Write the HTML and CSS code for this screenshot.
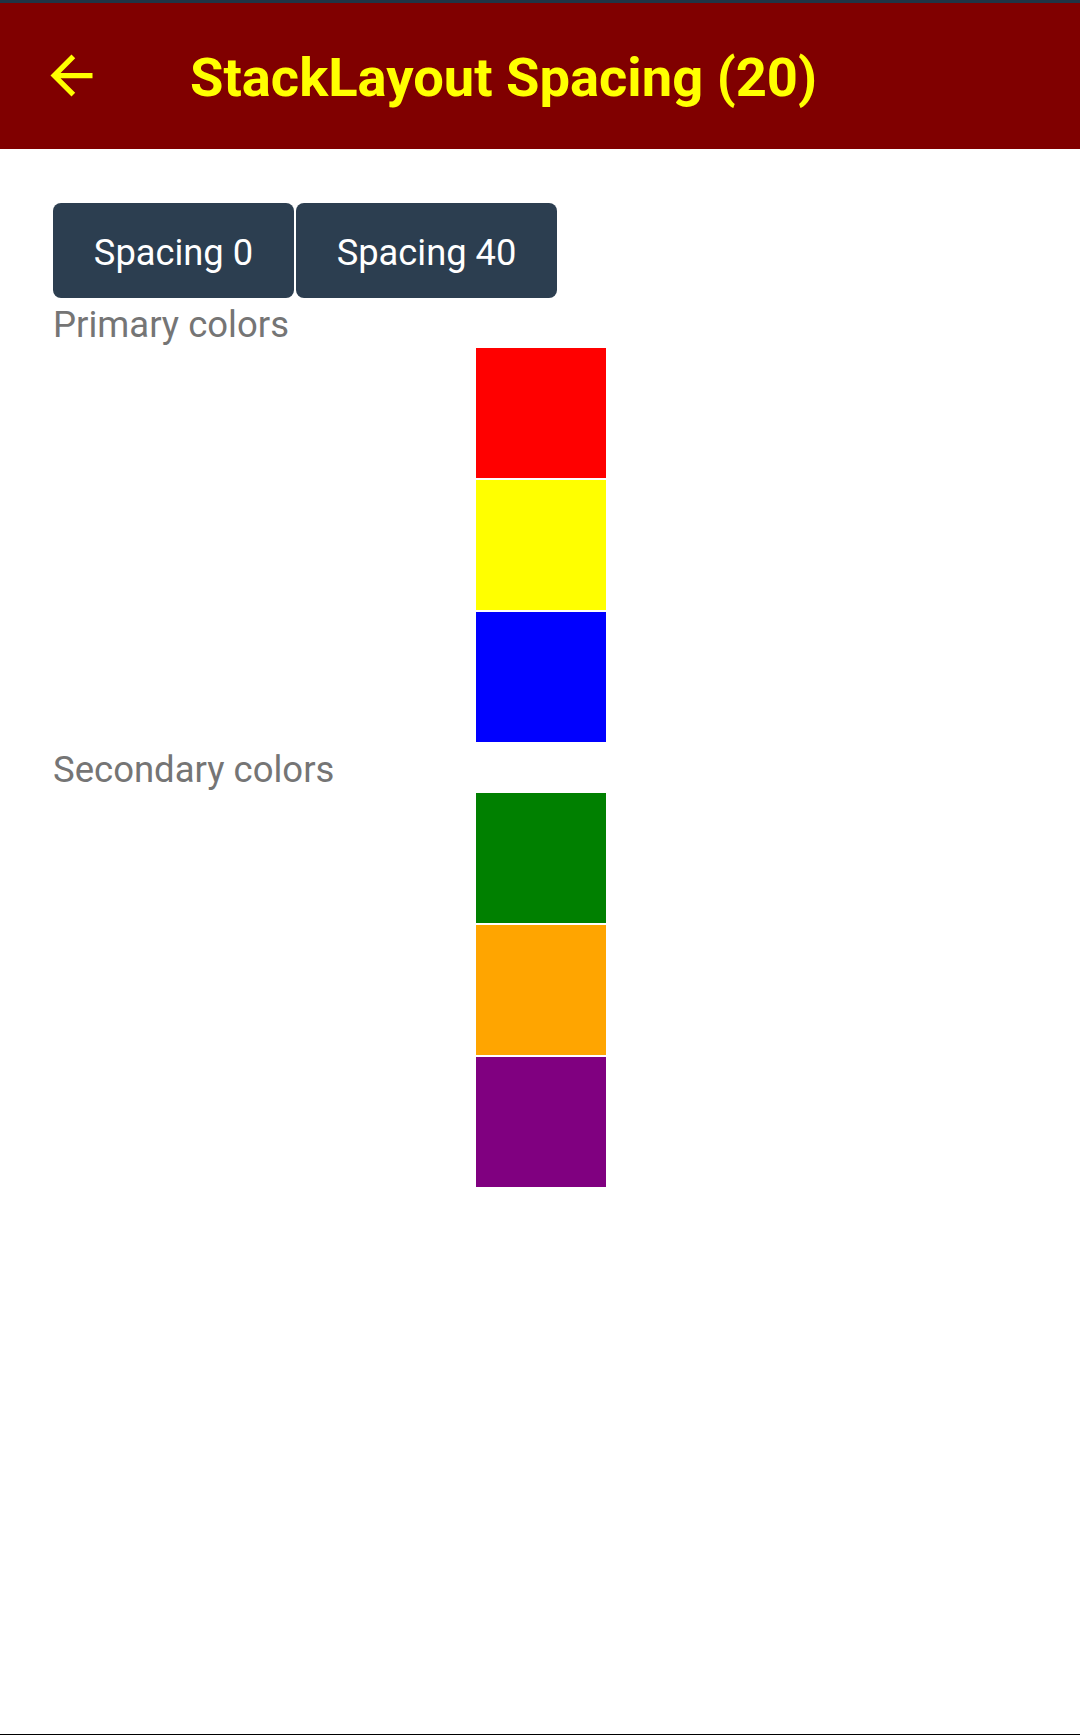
FILE: index.html
```html
<!DOCTYPE html>
<html>
<head>
<meta charset="utf-8">
<link rel="stylesheet" href="styles.css">
</head>
<body>
<div class="screen">
  <div class="status-strip"></div>
  <header class="toolbar">
    <svg class="back" viewBox="0 0 24 24" width="63" height="63"><path d="M20 11H7.83l5.59-5.59L12 4l-8 8 8 8 1.41-1.41L7.83 13H20v-2z" fill="#ffff00"/></svg>
    <div class="title">StackLayout Spacing (20)</div>
  </header>
  <main class="content">
    <div class="buttons">
      <div class="btn btn-0">Spacing 0</div>
      <div class="btn btn-40">Spacing 40</div>
    </div>
    <div class="label">Primary colors</div>
    <div class="box red"></div>
    <div class="box yellow"></div>
    <div class="box blue"></div>
    <div class="label label-second">Secondary colors</div>
    <div class="box green"></div>
    <div class="box orange"></div>
    <div class="box purple"></div>
  </main>
  <div class="bottom-line"></div>
</div>
</body>
</html>
```
FILE: styles.css
```css
html, body {
  margin: 0;
  padding: 0;
  background: #ffffff;
}
.screen {
  width: 1080px;
  height: 1735px;
  display: flex;
  flex-direction: column;
  font-family: Roboto, "Liberation Sans", sans-serif;
  overflow: hidden;
}
.status-strip {
  height: 3px;
  background: #1f3546;
  flex: none;
}
.toolbar {
  height: 146px;
  flex: none;
  background: #800000;
  display: flex;
  align-items: center;
  padding-left: 40px;
  box-sizing: border-box;
}
.back {
  display: block;
  flex: none;
  margin-top: -1px;
}
.title {
  margin-left: 87px;
  color: #ffff00;
  font-weight: 700;
  font-size: 54.3px;
  line-height: 1;
  margin-top: 4px;
}
.content {
  flex: 1;
  display: flex;
  flex-direction: column;
  gap: 2px;
  padding: 54px 51px 0 53px;
}
.buttons {
  display: flex;
  gap: 2px;
}
.btn {
  height: 95px;
  box-sizing: border-box;
  background: #2c3e50;
  color: #ffffff;
  border-radius: 8px;
  font-size: 36.3px;
  padding-top: 4px;
  display: flex;
  align-items: center;
  justify-content: center;
}
.btn-0 { width: 241px; }
.btn-40 { width: 261px; }
.label {
  color: #757575;
  font-size: 36.5px;
  line-height: 44px;
  padding-top: 3px;
  height: 46px;
  box-sizing: border-box;
}
.label-second {
  height: 47px;
  padding-top: 4px;
}
.box {
  width: 130px;
  height: 130px;
  align-self: center;
}
.red { background: #ff0000; }
.yellow { background: #ffff00; }
.blue { background: #0000ff; }
.green { background: #008000; }
.orange { background: #ffa500; }
.purple { background: #800080; }
.bottom-line {
  height: 1px;
  background: #000000;
  flex: none;
}
```
